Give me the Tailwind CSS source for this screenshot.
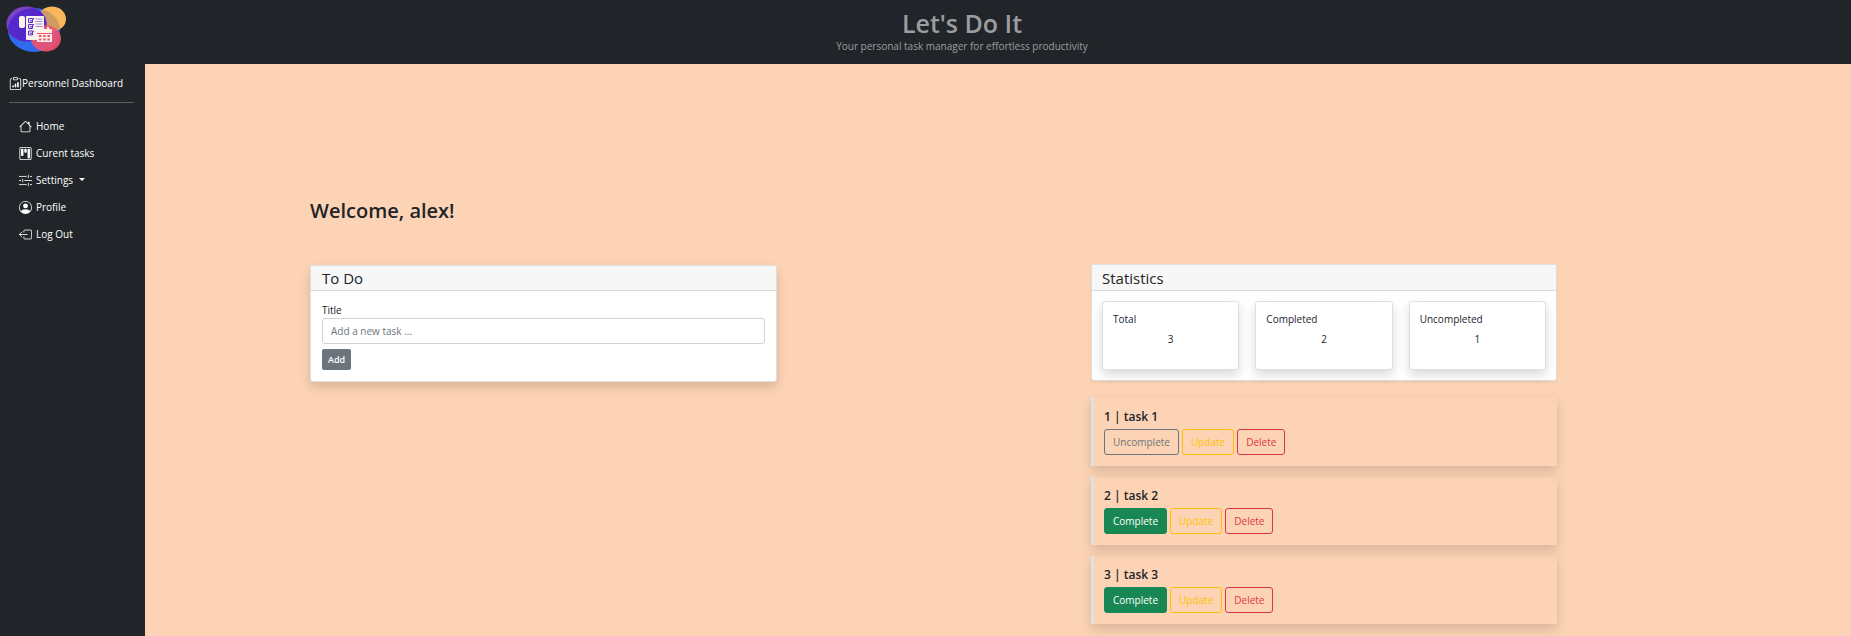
<!DOCTYPE html>
<html lang="en">
<head>
<meta charset="utf-8">
<meta name="viewport" content="width=device-width, initial-scale=1">
<title>Let's Do It</title>
<script src="https://cdn.jsdelivr.net/npm/@tailwindcss/browser@4"></script>
</head>
<body class="min-h-screen flex flex-col bg-[#fcd3b4] text-[#212529] font-['Open_Sans',sans-serif] text-[10px] leading-4">
<header class="h-16 shrink-0 flex items-center bg-[#212529]">
  <a href="#" aria-label="Let's Do It" class="w-[73px] pl-1.5 pb-1.5">
    <svg class="w-[60px] h-[46px]" viewBox="0 0 60 46">
      <clipPath id="blob"><ellipse cx="28" cy="24" rx="26" ry="22"/></clipPath>
      <ellipse cx="28" cy="24" rx="26" ry="22" fill="#2f6cf0"/>
      <ellipse cx="46" cy="13" rx="14" ry="12.500" fill="#fab65c"/>
      <g clip-path="url(#blob)">
        <ellipse cx="46" cy="13" rx="14" ry="12.500" fill="#cf9c62"/>
      </g>
      <ellipse cx="20.500" cy="18" rx="20" ry="17.500" fill="#7b42c4"/>
      <g clip-path="url(#blob)"><ellipse cx="20.500" cy="18" rx="20" ry="17.500" fill="#5528cc"/></g>
      <ellipse cx="40" cy="32.500" rx="15" ry="13" fill="#f4526f" fill-opacity=".9"/>
      <rect x="13" y="10" width="6" height="12" rx="2" fill="#fbf3ea"/>
      <rect x="20" y="10" width="18" height="24" rx="1" fill="#fbf3ea"/>
      <path d="M22.500 12.500h4v4h-4zM22.500 18.500h4v4h-4zM22.500 25h4v4h-4z" fill="none" stroke="#5a2cd0"/>
      <path d="m24 14 1 1.500L28 12M24 20l1 1.500L28 18M24 26.500l1 1.500 3-3.500" fill="none" stroke="#5a2cd0"/>
      <path d="M29.500 13h7M29.500 15.500h7M29.500 18h7M29.500 20.500h7" stroke="#a18ae0"/>
      <rect x="31" y="23" width="15" height="13" rx="1" fill="#fbf3ea"/>
      <path d="M31 27.500h15" stroke="#f4526f"/>
      <path d="M35 21v4M42 21v4" stroke="#fbf3ea" stroke-width="2"/>
      <path d="M33 30h11M33 33.500h11" stroke="#f4526f" stroke-width="2" stroke-dasharray="2.500 1.700"/>
    </svg>
  </a>
  <div class="flex-1 pb-0.5 text-center text-[#9b9da0]">
    <h1 class="text-[25px] leading-[30px] font-semibold">Let's Do It</h1>
    <p>Your personal task manager for effortless productivity</p>
  </div>
</header>
<div class="flex flex-1">
  <aside class="w-[145px] shrink-0 bg-[#212529] text-white pl-[9px] pr-[11px] pt-[11px]">
    <a href="#" class="flex items-center">
      <svg class="size-[13px]" viewBox="0 0 16 16" fill="currentColor"><path d="M4 11a1 1 0 1 1 2 0v1a1 1 0 1 1-2 0v-1zm6-4a1 1 0 1 1 2 0v5a1 1 0 1 1-2 0V7zM7 9a1 1 0 0 1 2 0v3a1 1 0 1 1-2 0V9z"/><path d="M4 1.500H3a2 2 0 0 0-2 2V14a2 2 0 0 0 2 2h10a2 2 0 0 0 2-2V3.500a2 2 0 0 0-2-2h-1v1h1a1 1 0 0 1 1 1V14a1 1 0 0 1-1 1H3a1 1 0 0 1-1-1V3.500a1 1 0 0 1 1-1h1v-1z"/><path d="M9.500 1a.5.5 0 0 1 .5.5v1a.5.5 0 0 1-.5.5h-3a.5.5 0 0 1-.5-.5v-1a.5.5 0 0 1 .5-.5h3zm-3-1A1.500 1.500 0 0 0 5 1.500v1A1.500 1.500 0 0 0 6.500 4h3A1.500 1.500 0 0 0 11 2.500v-1A1.500 1.500 0 0 0 9.500 0h-3z"/></svg>
      <span>Personnel Dashboard</span>
    </a>
    <hr class="mt-[11px] mb-[9px] border-[#5b5e61]">
    <nav>
      <ul class="pl-2.5">
        <li><a href="#" class="flex items-center gap-1 h-[27px]"><svg class="size-[13px] mt-0.5" viewBox="0 0 16 16" fill="currentColor"><path d="M2 13.500V7h1v6.500a.5.5 0 0 0 .5.5h9a.5.5 0 0 0 .5-.5V7h1v6.500a1.500 1.500 0 0 1-1.500 1.500h-9A1.500 1.500 0 0 1 2 13.500zm11-11V6l-2-2V2.500a.5.5 0 0 1 .5-.5h1a.5.5 0 0 1 .5.5z"/><path d="M7.293 1.500a1 1 0 0 1 1.414 0l6.647 6.646a.5.5 0 0 1-.708.708L8 2.207 1.354 8.854a.5.5 0 1 1-.708-.708L7.293 1.500z"/></svg>Home</a></li>
        <li><a href="#" class="flex items-center gap-1 h-[27px]"><svg class="size-[13px] mt-0.5" viewBox="0 0 16 16" fill="currentColor"><path d="M13.500 1a1 1 0 0 1 1 1v12a1 1 0 0 1-1 1h-11a1 1 0 0 1-1-1V2a1 1 0 0 1 1-1h11zm-11-1a2 2 0 0 0-2 2v12a2 2 0 0 0 2 2h11a2 2 0 0 0 2-2V2a2 2 0 0 0-2-2h-11z"/><path d="M6.500 3a1 1 0 0 1 1-1h1a1 1 0 0 1 1 1v3a1 1 0 0 1-1 1h-1a1 1 0 0 1-1-1V3zm-4 0a1 1 0 0 1 1-1h1a1 1 0 0 1 1 1v7a1 1 0 0 1-1 1h-1a1 1 0 0 1-1-1V3zm8 0a1 1 0 0 1 1-1h1a1 1 0 0 1 1 1v10a1 1 0 0 1-1 1h-1a1 1 0 0 1-1-1V3z"/></svg>Curent tasks</a></li>
        <li><button type="button" class="flex items-center gap-1 h-[27px]"><svg class="size-[13px] mt-0.5" viewBox="0 0 16 16" fill="none" stroke="currentColor"><path d="M0 3h9.500M13.500 3H16M0 8h2.500M6.500 8H16M0 13h9.500M13.500 13H16M11.500 1v4M4.500 6v4M11.500 11v4"/></svg>Settings<span class="ml-0.5 border-x-[3px] border-x-transparent border-t-[3px] border-t-white"></span></button></li>
        <li><a href="#" class="flex items-center gap-1 h-[27px]"><svg class="size-[13px] mt-0.5" viewBox="0 0 16 16" fill="currentColor"><path d="M11 6a3 3 0 1 1-6 0 3 3 0 0 1 6 0z"/><path fill-rule="evenodd" d="M0 8a8 8 0 1 1 16 0A8 8 0 0 1 0 8zm8-7a7 7 0 0 0-5.468 11.370C3.242 11.226 4.805 10 8 10s4.757 1.225 5.468 2.370A7 7 0 0 0 8 1z"/></svg>Profile</a></li>
        <li><a href="#" class="flex items-center gap-1 h-[27px]"><svg class="size-[13px] mt-0.5" viewBox="0 0 16 16" fill="none" stroke="currentColor" stroke-linecap="round" stroke-linejoin="round"><path d="M6 5V3.500a1 1 0 0 1 1-1h7.500a1 1 0 0 1 1 1v9a1 1 0 0 1-1 1H7a1 1 0 0 1-1-1V11M.5 8H10M3.500 5l-3 3 3 3"/></svg>Log Out</a></li>
      </ul>
    </nav>
  </aside>
  <main class="flex-1 pl-[165px] pr-[294px] pt-[133px] pb-3">
    <h2 class="text-[20px] leading-7 font-semibold">Welcome, alex!</h2>
    <div class="mt-[39px] flex items-start justify-between gap-8">
      <section class="w-[467px] mt-px bg-white border border-[#dfdfdf] rounded-[3px] shadow-[0_5px_11px_rgba(0,0,0,0.15)]">
        <h3 class="h-[25px] flex items-center px-[11px] text-[15px] bg-[#f7f7f7] border-b border-[#d8d8d8]">To Do</h3>
        <form class="p-[11px]">
          <label for="title" class="block">Title</label>
          <input id="title" type="text" placeholder="Add a new task ..." class="block w-full h-[26px] px-2 border border-[#ced4da] rounded-[3px] bg-white placeholder:text-[#6c757d]">
          <button type="button" class="mt-[5px] h-[21px] px-1.5 rounded-[2px] bg-[#6c757d] text-white text-[9px] font-semibold">Add</button>
        </form>
      </section>
      <div class="w-[466px]">
        <section class="bg-white border border-[#dfdfdf] rounded-[3px] shadow-[0_1px_3px_rgba(0,0,0,0.08)]">
          <h3 class="h-[26px] flex items-center px-[10px] text-[15px] bg-[#f7f7f7] border-b border-[#d8d8d8]">Statistics</h3>
          <div class="grid grid-cols-3 gap-4 p-[10px]">
            <div class="h-[69px] px-[10px] py-[9px] bg-white border border-[#dfdfdf] rounded-[3px] shadow-[0_5px_11px_rgba(0,0,0,0.15)]"><h4 class="font-medium">Total</h4><p class="mt-1 text-center">3</p></div>
            <div class="h-[69px] px-[10px] py-[9px] bg-white border border-[#dfdfdf] rounded-[3px] shadow-[0_5px_11px_rgba(0,0,0,0.15)]"><h4 class="font-medium">Completed</h4><p class="mt-1 text-center">2</p></div>
            <div class="h-[69px] px-[10px] py-[9px] bg-white border border-[#dfdfdf] rounded-[3px] shadow-[0_5px_11px_rgba(0,0,0,0.15)]"><h4 class="font-medium">Uncompleted</h4><p class="mt-1 text-center">1</p></div>
          </div>
        </section>
        <ul class="mt-4 flex flex-col gap-[11px]">
          <li class="border-l-[3px] border-[#dee2e6] px-[10px] pt-3 pb-[11px] shadow-[0_5px_11px_rgba(0,0,0,0.15)]">
            <h4 class="text-[12px] leading-4 font-semibold">1 | task 1</h4>
            <div class="mt-1 flex gap-[3px]">
              <button type="button" class="h-[26px] px-2 border border-[#6c757d] rounded-[3px] text-[#6c757d]">Uncomplete</button>
              <button type="button" class="h-[26px] px-2 border border-[#ffc107] rounded-[3px] text-[#ffc107]">Update</button>
              <button type="button" class="h-[26px] px-2 border border-[#dc3545] rounded-[3px] text-[#dc3545]">Delete</button>
            </div>
          </li>
          <li class="border-l-[3px] border-[#dee2e6] px-[10px] pt-[11px] pb-[11px] shadow-[0_5px_11px_rgba(0,0,0,0.15)]">
            <h4 class="text-[12px] leading-4 font-semibold">2 | task 2</h4>
            <div class="mt-1 flex gap-[3px]">
              <button type="button" class="h-[26px] px-2 border border-[#198754] rounded-[3px] bg-[#198754] text-white">Complete</button>
              <button type="button" class="h-[26px] px-2 border border-[#ffc107] rounded-[3px] text-[#ffc107]">Update</button>
              <button type="button" class="h-[26px] px-2 border border-[#dc3545] rounded-[3px] text-[#dc3545]">Delete</button>
            </div>
          </li>
          <li class="border-l-[3px] border-[#dee2e6] px-[10px] pt-[11px] pb-[11px] shadow-[0_5px_11px_rgba(0,0,0,0.15)]">
            <h4 class="text-[12px] leading-4 font-semibold">3 | task 3</h4>
            <div class="mt-1 flex gap-[3px]">
              <button type="button" class="h-[26px] px-2 border border-[#198754] rounded-[3px] bg-[#198754] text-white">Complete</button>
              <button type="button" class="h-[26px] px-2 border border-[#ffc107] rounded-[3px] text-[#ffc107]">Update</button>
              <button type="button" class="h-[26px] px-2 border border-[#dc3545] rounded-[3px] text-[#dc3545]">Delete</button>
            </div>
          </li>
        </ul>
      </div>
    </div>
  </main>
</div>
</body>
</html>
